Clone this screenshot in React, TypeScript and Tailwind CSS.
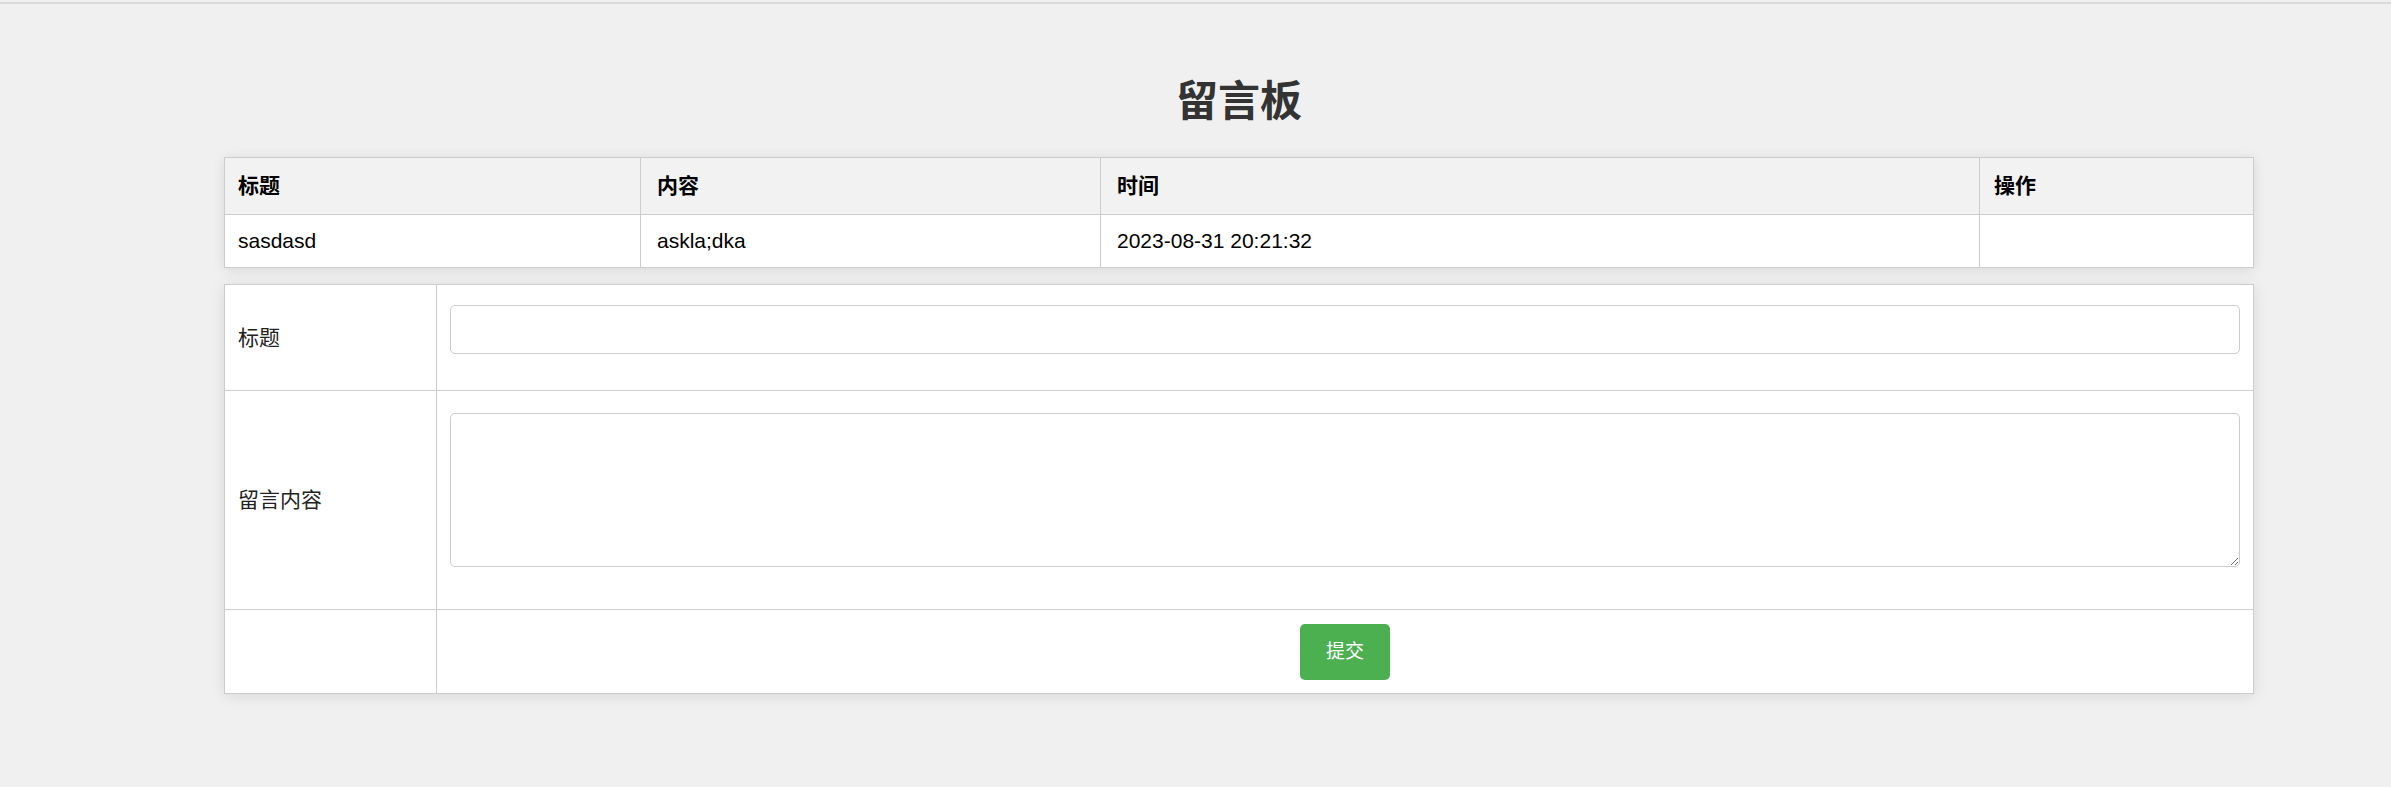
import React from "react";

const font = { fontFamily: '"Liberation Sans", "Noto Sans CJK SC", sans-serif' };

const messages = [
    { id: 1, title: "sasdasd", content: "askla;dka", time: "2023-08-31 20:21:32" },
];

export default function App() {
    return (
        <div className="min-h-screen bg-[#f0f0f0] text-black" style={font}>
            {/* top rule */}
            <div className="pt-[2px]">
                <div className="h-[2px] bg-[#dadada]" />
            </div>

            <div className="ml-[224px] w-[2030px] pt-[73px]">
                <h1 className="text-center text-[42px] leading-[50px] font-bold text-[#333] mb-[30px]">留言板</h1>

                {/* message list */}
                <div className="bg-white border border-[#cccccc] shadow-[0_2px_12px_rgba(0,0,0,0.1)]">
                    <div className="grid grid-cols-[415px_460px_879px_1fr] h-[57px] bg-[#f2f2f2] border-b border-[#cccccc] text-[21px] font-bold">
                        <div className="flex items-center pl-[13px]">标题</div>
                        <div className="flex items-center pl-[16px] border-l border-[#cccccc]">内容</div>
                        <div className="flex items-center pl-[16px] border-l border-[#cccccc]">时间</div>
                        <div className="flex items-center pl-[14px] border-l border-[#cccccc]">操作</div>
                    </div>
                    {messages.map((m) => (
                        <div key={m.id} className="grid grid-cols-[415px_460px_879px_1fr] h-[52px] text-[21px]">
                            <div className="flex items-center pl-[13px]">{m.title}</div>
                            <div className="flex items-center pl-[16px] border-l border-[#cccccc]">{m.content}</div>
                            <div className="flex items-center pl-[16px] border-l border-[#cccccc]">{m.time}</div>
                            <div className="flex items-center pl-[14px] border-l border-[#cccccc]"></div>
                        </div>
                    ))}
                </div>

                {/* form */}
                <div className="mt-[16px] bg-white border border-[#cccccc] shadow-[0_2px_14px_rgba(0,0,0,0.1)] text-[21px] text-[#222]">
                    <div className="grid grid-cols-[211px_1fr] h-[106px] border-b border-[#cccccc]">
                        <div className="flex items-center pl-[13px]">标题</div>
                        <div className="border-l border-[#cccccc] pl-[13px] pr-[13px] pt-[20px]">
                            <input type="text" className="block w-full h-[49px] border border-[#cccccc] rounded-[5px] px-3 outline-none bg-white" />
                        </div>
                    </div>
                    <div className="grid grid-cols-[211px_1fr] h-[219px] border-b border-[#cccccc]">
                        <div className="flex items-center pl-[13px]">留言内容</div>
                        <div className="border-l border-[#cccccc] pl-[13px] pr-[13px] pt-[22px]">
                            <textarea className="block w-full h-[154px] border border-[#cccccc] rounded-[5px] px-3 py-2 outline-none bg-white resize-y" />
                        </div>
                    </div>
                    <div className="grid grid-cols-[211px_1fr] h-[83px]">
                        <div />
                        <div className="border-l border-[#cccccc] flex justify-center pt-[14px]">
                            <button className="w-[90px] h-[56px] bg-[#4caf50] text-white text-[19px] rounded-[5px]">提交</button>
                        </div>
                    </div>
                </div>
            </div>
        </div>
    );
}
